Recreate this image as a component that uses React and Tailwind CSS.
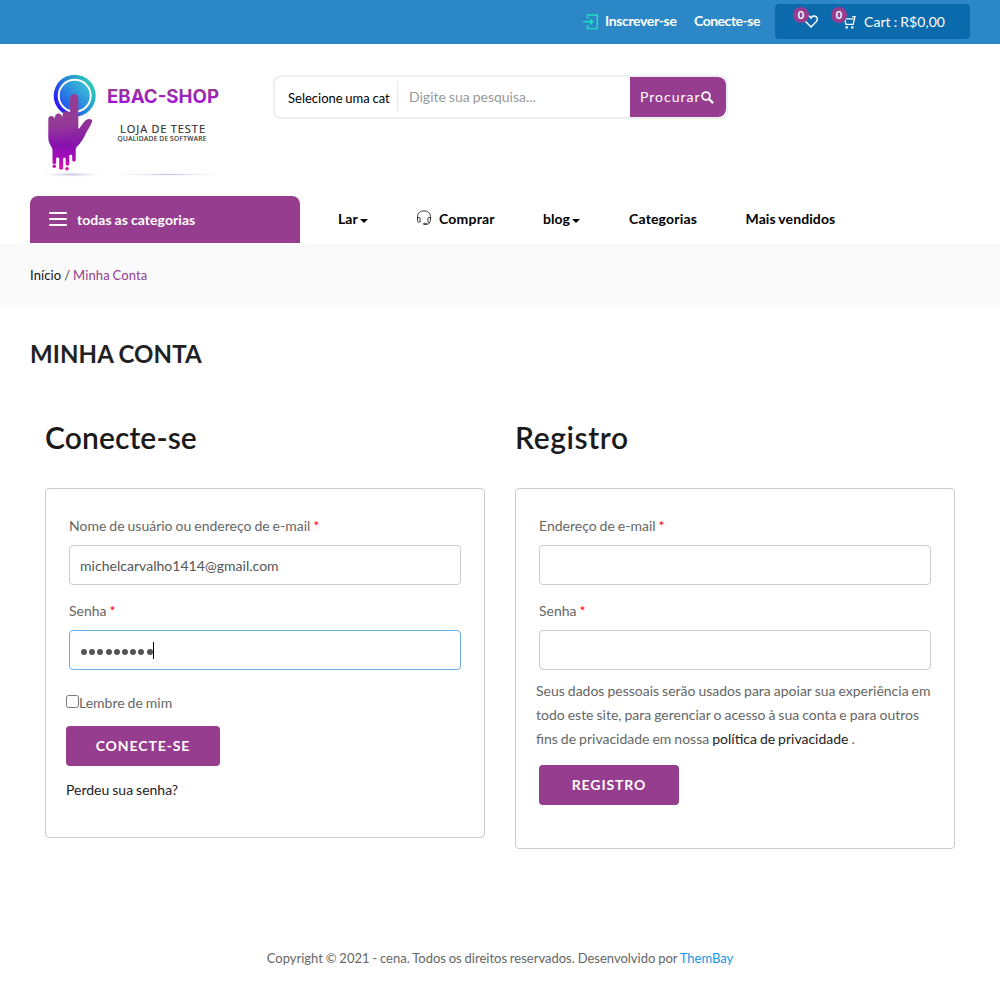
import React from "react";

function LoginIcon() {
  return (
    <svg width="15" height="16" viewBox="0 0 15 16" fill="none" stroke="#1fe0c0" strokeWidth="1.4" className="shrink-0">
      <path d="M4.500 4.500V1h9.800v13.600H4.500V11M0 7.800h9.600M7 5l2.800 2.800L7 10.600" />
    </svg>
  );
}

function HeartIcon() {
  return (
    <svg width="14" height="13" viewBox="0 0 14 13" fill="none" stroke="#fff" strokeWidth="1.4" strokeLinejoin="round">
      <path d="M7 12 1.6 6.400C.2 4.800.5 2.600 1.900 1.600c1.500-1.100 3.700-.7 4.700.9l.4.800.4-.8C8.400.9 10.600.5 12.100 1.600c1.400 1 1.700 3.200.3 4.800Z" />
    </svg>
  );
}

function CartIcon() {
  return (
    <svg width="14" height="14" viewBox="0 0 14 14" fill="none" stroke="#fff" strokeWidth="1.3">
      <path d="M1 3h1.300l1.700 6.300h7.200l1.800-7.700h-2.700M2.500 3.800h9" />
      <path d="M3.600 12.300h2.200M9.200 12.300h2.200" strokeWidth="2.200" />
    </svg>
  );
}

function HeadsetIcon() {
  return (
    <svg width="16" height="16" viewBox="0 0 16 16" fill="none" stroke="#333" strokeWidth="1" className="mb-[2px]">
      <path d="M1.500 9V6.500C1.500 3 4.300.9 8 .9s6.500 2.100 6.500 5.600V9M1.500 7.500h1.700c.6 0 .8.300.8.800v3.200c0 .5-.3.800-.8.800-1 0-1.700-.6-1.700-1.600ZM14.500 7.500h-1.700c-.6 0-.8.300-.8.800v3.200c0 .5.300.8.800.8 1 0 1.700-.6 1.700-1.600ZM13.500 12c0 1.500-1 2.200-2.700 2.200" />
      <rect x="7.500" y="13.300" width="3.300" height="1.200" rx=".6" />
    </svg>
  );
}

function SearchIcon() {
  return (
    <svg width="13" height="13" viewBox="0 0 13 13" fill="none" stroke="#fff" className="mt-px">
      <circle cx="5" cy="5" r="3.900" strokeWidth="1.800" />
      <path d="m7.800 7.800 4.300 4.300" strokeWidth="2.200" />
    </svg>
  );
}

function Logo() {
  return (
    <svg width="210" height="130" viewBox="0 0 210 130" className="block shrink-0">
      <defs>
        <linearGradient id="ring" x1="0" y1=".8" x2="1" y2=".2">
          <stop offset=".05" stopColor="#2b10f5" />
          <stop offset=".5" stopColor="#2485dc" />
          <stop offset=".95" stopColor="#2cd0b5" />
        </linearGradient>
        <linearGradient id="disc" x1="0" y1="1" x2="1" y2="0">
          <stop offset=".1" stopColor="#2550ef" />
          <stop offset=".5" stopColor="#2e8fdf" />
          <stop offset=".9" stopColor="#38c0d4" />
        </linearGradient>
        <linearGradient id="hand" gradientUnits="userSpaceOnUse" x1="0" y1="34" x2="0" y2="110">
          <stop offset="0" stopColor="#963d91" />
          <stop offset=".4" stopColor="#943a96" />
          <stop offset=".7" stopColor="#8d10b5" />
          <stop offset=".82" stopColor="#a00cb8" />
          <stop offset="1" stopColor="#e013ae" />
        </linearGradient>
        <linearGradient id="name" gradientUnits="userSpaceOnUse" x1="0" y1="29" x2="0" y2="43">
          <stop offset="0" stopColor="#963d91" />
          <stop offset="1" stopColor="#a010d8" />
        </linearGradient>
        <radialGradient id="shade">
          <stop offset="0" stopColor="#c4c2e2" />
          <stop offset="1" stopColor="#fff" stopOpacity="0" />
        </radialGradient>
      </defs>
      <ellipse cx="42" cy="114.500" rx="36" ry="2.800" fill="url(#shade)" />
      <ellipse cx="139" cy="114.500" rx="66" ry="1.500" fill="url(#shade)" />
      <circle cx="44.700" cy="35.700" r="21" fill="url(#ring)" />
      <circle cx="44.700" cy="35.700" r="17" fill="#fff" />
      <circle cx="44.700" cy="35.700" r="15" fill="url(#disc)" />
      <g fill="url(#hand)">
        <path d="M18.300 59c0-4 6-4 6.300 0 0-7 6.900-7 7.600-1.500 0-8 7.300-8 7.900-2V38c0-5.500 8.200-5.500 8.200 0v31c3-2 4.500-7 8.200-9.300 2.500-1.600 6.500-.8 5.600 2-2 5-4.600 8-6.600 12.300-2.200 5-5 9.500-9 13l-.8 3v10c0 2-3.500 2-3.500 0v-4c0-1.800-2.900-1.800-2.900 0v8c0 2.200-3.600 2.200-3.600 0v-5c0-1.600-2.600-1.600-2.600 0v9c0 2.200-3.900 2.200-3.900 0v-9c0-2-3-2-3-.5v4c0 2.200-3.700 2.200-3.700 0V90c0-3-4-5.500-4.200-12Z" />
        <circle cx="24.300" cy="106.300" r="1.800" />
        <circle cx="37" cy="108.800" r="1.800" />
      </g>
      <path d="M18.300 80c12 3 26-4 30-20v9c3-2 4.500-7 8.200-9.300 2.500-1.600 6.500-.8 5.600 2-2 5-4.600 8-6.600 12.300-2.200 5-5 9.500-9 13-9 3-20 2-25 0Z" fill="#6d0d98" fillOpacity=".15" />
      <text x="77" y="43" fill="url(#name)" fontFamily="Inter, sans-serif" fontWeight="700" fontSize="18.500" textLength="112" lengthAdjust="spacingAndGlyphs">EBAC-SHOP</text>
      <text x="90" y="72.500" fill="#333" stroke="#333" strokeWidth=".2" fontFamily="Open Sans, sans-serif" fontSize="11" textLength="85" lengthAdjust="spacing">LOJA DE TESTE</text>
      <text x="87.500" y="81" fill="#222" stroke="#222" strokeWidth=".15" fontFamily="Open Sans, sans-serif" fontSize="6.600" textLength="89" lengthAdjust="spacing">QUALIDADE DE SOFTWARE</text>
    </svg>
  );
}

function Caret() {
  return <span className="ml-[2px] mt-[4px] inline-block border-x-4 border-t-4 border-x-transparent border-t-black" />;
}

function Badge() {
  return (
    <span className="absolute -left-[11px] -top-[8px] flex h-4 w-4 items-center justify-center rounded-full bg-[#963d8f] pb-px text-[11px] font-bold leading-none text-white">
      0
    </span>
  );
}

function Field({ label, children, active }) {
  return (
    <div className="ml-[3px] h-[85px] w-[392px]">
      <div className="h-[29px] text-[14px] leading-[20px] text-[#666]">
        {label} <span className="text-[#f00]">*</span>
      </div>
      <div
        className={
          active
            ? "flex h-10 items-center rounded border border-[#66afe9] px-[10px]"
            : "flex h-10 items-center rounded border border-[#ccc] px-[10px]"
        }
      >
        {children}
      </div>
    </div>
  );
}

export default function App() {
  return (
    <div className="h-[1004px] w-[1000px] overflow-hidden bg-white font-[Lato,sans-serif] text-[14px] text-black [word-spacing:-0.6px]">
      <div className="flex h-11 items-start bg-[#2b87c5] pl-[583px] text-white">
        <div className="flex h-[43px] w-[111px] items-center whitespace-nowrap font-bold tracking-[-0.35px]">
          <LoginIcon />
          <span className="mb-[2px] ml-[7px]">Inscrever-se</span>
        </div>
        <div className="flex h-[41px] w-[81px] items-center whitespace-nowrap font-bold tracking-[-0.48px]">Conecte-se</div>
        <div className="mt-1 flex h-[35px] w-[195px] items-center rounded bg-[#0b6aab]">
          <div className="relative ml-[29px]">
            <HeartIcon />
            <Badge />
          </div>
          <div className="relative ml-6 mt-px">
            <CartIcon />
            <Badge />
          </div>
          <span className="ml-2 whitespace-nowrap tracking-[0.05px]">Cart : R$0,00</span>
        </div>
      </div>

      <div className="flex h-[152px] pl-[30px] pt-4">
        <Logo />
        <div className="ml-[33px] mt-[15px] flex h-[44px] w-[455px] rounded-[8px] border-2 border-[#efefef]">
          <div className="my-[5px] flex w-[123px] items-center overflow-hidden whitespace-nowrap border-r border-[#e8e8e8] pl-[13px] pt-[3px] text-[13px]">
            Selecione uma cat
          </div>
          <div className="flex flex-1 items-center pb-[2px] pl-[11px] text-[#999]">Digite sua pesquisa...</div>
          <div className="flex w-[96px] items-center rounded-r-[8px] bg-[#963d8f] pb-px pl-[10px] text-[14px] tracking-[1px] text-white">
            Procurar
            <SearchIcon />
          </div>
        </div>
      </div>

      <div className="flex h-12 items-start whitespace-nowrap font-bold">
        <div className="ml-[30px] flex h-[47px] w-[270px] items-center rounded-t-lg bg-[#963d8f] pl-[19px] text-white">
          <div className="mb-px flex w-[18px] flex-col gap-1">
            <span className="h-[2px] rounded-full bg-white" />
            <span className="h-[2px] rounded-full bg-white" />
            <span className="h-[2px] rounded-full bg-white" />
          </div>
          <span className="ml-[10px] tracking-[0.07px]">todas as categorias</span>
        </div>
        <div className="flex h-[45px] w-[78px] items-center pl-[38px]">
          Lar
          <Caret />
        </div>
        <div className="ml-[38px] flex h-[45px] w-[127px] items-center">
          <HeadsetIcon />
          <span className="ml-[7px] tracking-[0.2px]">Comprar</span>
        </div>
        <div className="flex h-[45px] w-[86px] items-center">
          blog
          <Caret />
        </div>
        <div className="flex h-[45px] w-[116.500px] items-center tracking-[0.18px]">Categorias</div>
        <div className="flex h-[45px] items-center tracking-[0.1px]">Mais vendidos</div>
      </div>

      <div className="flex h-[61px] items-center bg-[#fafafa] pl-[30px] pt-[2px] text-[13px] tracking-[0.12px]">
        <span className="text-[#111]">Início&nbsp;</span>
        <span className="text-[#444]">/&nbsp;</span>
        <span className="text-[#963d8f]">Minha Conta</span>
      </div>

      <h1 className="ml-[30px] mt-[34px] text-[24px] font-bold leading-[30px] tracking-[0.1px] text-[#222]">MINHA CONTA</h1>

      <div className="ml-[45px] mt-[48px] flex items-start gap-[30px]">
        <section className="w-[440px]">
          <h2 className="h-[71px] text-[30px] font-semibold leading-[40px] tracking-[0.1px] text-[#1a1a1a]">Conecte-se</h2>
          <div className="h-[350px] rounded border border-[#ccc] pl-5 pt-[27px]">
            <Field label="Nome de usuário ou endereço de e-mail">
              <span className="tracking-[0.03px] text-[#555]">michelcarvalho1414@gmail.com</span>
            </Field>
            <Field label="Senha" active>
              <span className="ml-px mt-[3px] flex gap-[2.200px]">
                {Array.from({ length: 9 }, (_, i) => (
                  <i key={i} className="h-[6px] w-[6px] rounded-full bg-[#555]" />
                ))}
              </span>
              <span className="h-[17px] w-px bg-black" />
            </Field>
            <div className="mt-[4px] flex h-[24px] items-center text-[#666]">
              <span className="mb-px h-[13px] w-[13px] rounded-[2.500px] border border-[#767676]" />
              Lembre de mim
            </div>
            <div className="mt-[12px] flex h-10 w-[154px] items-center justify-center rounded bg-[#963d8f] pb-px font-bold tracking-[0.9px] text-white">
              CONECTE-SE
            </div>
            <div className="mt-[14px] leading-[20px] text-[#222]">Perdeu sua senha?</div>
          </div>
        </section>
        <section className="w-[440px]">
          <h2 className="h-[71px] text-[30px] font-semibold leading-[40px] tracking-[0.6px] text-[#1a1a1a]">Registro</h2>
          <div className="h-[361px] rounded border border-[#ccc] pl-5 pt-[27px]">
            <Field label="Endereço de e-mail" />
            <Field label="Senha" />
            <p className="mt-[-7px] whitespace-nowrap leading-[24px] text-[#666]">
              Seus dados pessoais serão usados para apoiar sua experiência em
              <br />
              todo este site, para gerenciar o acesso à sua conta e para outros
              <br />
              fins de privacidade em nossa <span className="text-[#222]">política de privacidade</span> .
            </p>
            <div className="ml-[3px] mt-[14px] flex h-10 w-[140px] items-center justify-center rounded bg-[#963d8f] pb-px font-bold tracking-[0.9px] text-white">
              REGISTRO
            </div>
          </div>
        </section>
      </div>

      <footer className="mt-[99px] text-center text-[13px] leading-5 text-[#666] [word-spacing:-0.5px]">
        Copyright © 2021 - cena. Todos os direitos reservados. Desenvolvido por <span className="text-[#1595e8]">ThemBay</span>
      </footer>
    </div>
  );
}
